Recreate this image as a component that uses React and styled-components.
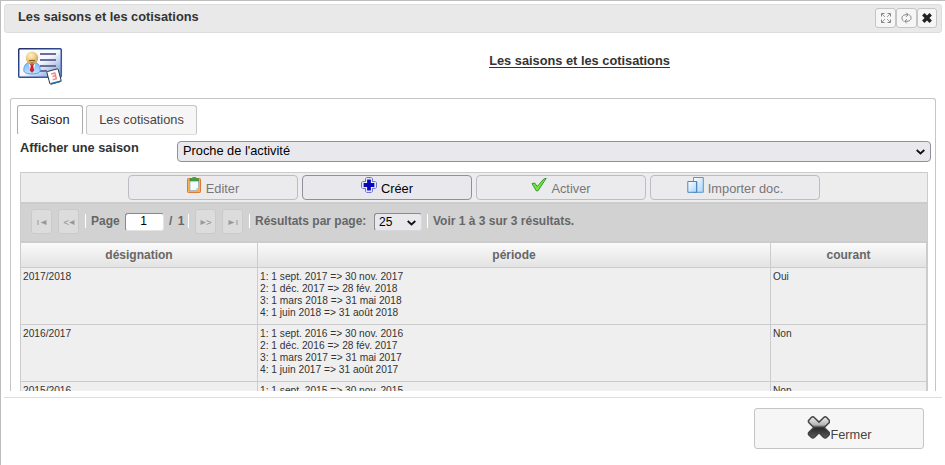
import React from "react";
import styled, { createGlobalStyle, css } from "styled-components";

const Global = createGlobalStyle`
  *, *::before, *::after { box-sizing: border-box; }
  body { margin: 0; background: #fff; overflow: hidden; }
  body, button, input, select { font-family: "Liberation Sans", Arial, sans-serif; }
`;

const Dialog = styled.main`
  width: 945px; height: 465px; overflow: hidden;
  border: solid #bdbdbd; border-width: 1px 0 0 1px;
  padding: 3px 3px 0; background: #fff; color: #333;
  font-size: 12.8px;
`;
const TitleBar = styled.header`
  height: 29px; display: flex; align-items: center; justify-content: space-between;
  padding: 0 4px 0 13px; border: 1px solid #ddd; border-radius: 3px; background: #e9e9e9;
`;
const DialogTitle = styled.h1`
  margin: 0 0 4px; font-size: 12.8px; line-height: 16px;
`;
const Controls = styled.div` display: flex; margin-bottom: 1px; `;
const Control = styled.button`
  width: ${p => p.$strong ? 20 : 21}px; height: 20px; padding: 0; display: grid; place-items: center;
  border: 1px solid #c5c5c5; border-radius: 3px; background: #f6f6f6; color: ${p => p.$strong ? "#222" : "#777"};
  svg { display: block; }
`;
const Heading = styled.section`
  height: 65px; display: grid; grid-template-columns: 206px 1fr; padding-top: 15px;
  > svg { margin-left: 14px; display: block; }
`;
const PageTitle = styled.h2`
  margin: 5px 0 0; padding-left: 7px; text-align: center; font-size: 12.8px; line-height: 16px;
  span { display: inline-block; line-height: 15px; border-bottom: 1px solid #333; height: 15px; }
`;
const Panel = styled.section`
  width: 926px; height: 293px; margin-left: 6px; overflow: hidden;
  border: 1px solid #c5c5c5; border-bottom: 0; border-radius: 3px 3px 0 0; padding: 6px 4px 0 6px;
`;
const Tabs = styled.nav` display: flex; gap: 3px; height: 30px; `;
const Tab = styled.button`
  width: ${p => p.$width}px; height: 30px; padding: 0 0 1px; border: 1px solid #c5c5c5; border-bottom-color: ${p => p.$active ? "#fff" : "#ddd"};
  border-radius: 3px; font-size: 12.8px; color: #454545; background: #f6f6f6;
  ${p => p.$active && css`background: #fff; color: #212121; border-color: #aaa #aaa #fff;`}
`;
const FilterRow = styled.div`
  display: grid; grid-template-columns: 157px 754px; margin: 6px 0 0 3px; height: 31px;
  label { font-weight: bold; line-height: 14px; }
`;
const SelectBox = styled.div`
  position: relative; height: ${p => p.$small ? 18 : 21}px; width: ${p => p.$small ? "48px" : "100%"};
  svg { position: absolute; right: 6px; top: ${p => p.$small ? 7 : 8}px; pointer-events: none; }
`;
const Select = styled.select`
  appearance: none; display: block; width: 100%; height: 100%; padding: 0 5px 2px; color: #000;
  border: 1px solid #8f8f9d; border-radius: 4px; background: #e9e9ed; font-size: 12.8px; line-height: 17px;
  ${p => p.$small && css`border-color: #8c8c8c #d8d8dc #d8d8dc #8c8c8c; border-radius: 3px; font-size: 12px; padding: 0 4px 3px;`}
`;
const Grid = styled.div` margin-left: 3px; width: 908px; border: 1px solid #ccc; border-bottom: 0; `;
const Toolbar = styled.div`
  height: 30px; padding: 2px 0 2px; display: flex; justify-content: center; gap: 4px;
  background: #ededed; border-bottom: 1px solid #ccc;
`;
const Action = styled.button`
  width: 170px; height: 25px; padding: 0 0 1px; display: flex; align-items: flex-start; justify-content: center; gap: 4px;
  border: 1px solid ${p => p.$active ? "#8f8f9d" : "#bcbcc5"}; border-radius: 4px; background: ${p => p.$active ? "#e9e9ed" : "#ebebed"};
  color: ${p => p.$active ? "#000" : "#777"}; font-size: 12.8px; line-height: 15px;
  svg { flex: none; margin-top: 1px; }
  span { margin-top: 5px; }
`;
const Pager = styled.div`
  height: 40px; display: flex; align-items: flex-start; background: #d2d2d2; padding-left: 10px;
  font-size: 12px; font-weight: bold; color: #666; border: solid #ccc; border-width: 1px 0 2px;
`;
const PageButton = styled.button`
  flex: none; width: 21px; height: 25px; margin: 5px 6px 0 0; padding: 1px 0 0; border: 1px solid #cacaca; border-radius: 3px; background: #dcdcdc;
  display: grid; place-items: center; color: #999;
`;
const Divider = styled.i` flex: none; width: 1px; height: 14px; background: #fff; margin: 10px ${p => p.$after || 0}px 0 0; `;
const PagerText = styled.span` flex: none; line-height: 14px; margin: 10px 0 0; width: ${p => p.$width}px; white-space: nowrap; word-spacing: ${p => p.$spread || 0}px; `;
const PageInput = styled.input`
  flex: none; width: 39px; height: 18px; margin: 9px 5px 0 0; border: 1px solid #e4e4e4; border-top-color: #888; border-left-color: #888; border-radius: 3px;
  padding: 0 2px 2px 0; text-align: center; font-size: 12px; color: #000; background: #fff;
`;
const PageSize = styled.div` flex: none; margin: 9px 5px 0 0; `;
const Table = styled.table`
  table-layout: fixed; width: 906px; border-collapse: separate; border-spacing: 0; border-right: 1px solid #ccc;
`;
const Th = styled.th`
  height: 25px; padding: 0; border-bottom: 1px solid #ccc; background: linear-gradient(#fafafa, #e3e3e3);
  font-size: 12px; line-height: 14px; color: #666;
  & + & { border-left: 1px solid #ccc; }
`;
const Td = styled.td`
  height: 57px; padding: 3px 2px 5px; vertical-align: top; border-bottom: 1px solid #ccc; background: #efefef;
  font-size: 10.2px; line-height: 12px; color: #333;
  & + & { border-left: 1px solid #ccc; }
  div { white-space: nowrap; }
`;
const Footer = styled.footer`
  height: 67px; margin-top: 6px; border-top: 1px solid #ddd; padding: 10px 18px 0 0; display: flex; justify-content: flex-end;
`;
const Close = styled.button`
  width: 170px; height: 41px; border: 1px solid #c5c5c5; border-radius: 3px; padding: 0 4px 0 5px; background: #f6f6f6;
  display: flex; align-items: flex-start; justify-content: center; color: #454545; font-size: 12.8px; line-height: 15px;
  svg { margin-top: 7px; } span { margin-top: 18px; }
`;

const Chevron = () => (
  <svg width="9" height="6" viewBox="0 0 9 6" fill="none" stroke="#111" strokeWidth="1.8"><path d="M.7 1 4.5 4.5 8.3 1" /></svg>
);
const ExpandIcon = () => (
  <svg width="10" height="10" viewBox="0 0 10 10" fill="none" stroke="currentColor" strokeWidth=".9">
    <path d="M.5 3.5v-3h3M6.5.5h3v3M9.5 6.5v3h-3M3.5 9.5h-3v-3" /><path d="m1 1 3 3M9 1 6 4M9 9 6 6M1 9l3-3" strokeDasharray="1.1 .5" />
  </svg>
);
const RefreshIcon = () => (
  <svg width="11" height="12" viewBox="0 0 11 12" fill="none" stroke="currentColor" strokeWidth=".9">
    <path d="M2.6 9.2C.4 7.6.7 4.6 2 3.7c.8-.8 2-1 5-1M5.2.6l2 2.1-2 2.1M8.4 2.8c2.2 1.6 1.9 4.6.6 5.5-.8.8-2 1-5 1M5.8 7.2l-2 2.1 2 2.1" />
  </svg>
);
const CrossIcon = () => (
  <svg width="10" height="10" viewBox="0 0 10 10" fill="none" stroke="currentColor" strokeWidth="3.4"><path d="m1.3 1.3 7.4 7.4m0-7.4L1.3 8.7" /></svg>
);
const MemberCardIcon = () => (
  <svg width="46" height="38" viewBox="0 0 46 38">
    <defs>
      <linearGradient id="card" x2="1" y2="1"><stop stopColor="#fff" /><stop offset=".5" stopColor="#f6f8ff" /><stop offset="1" stopColor="#6e8cd2" /></linearGradient>
      <linearGradient id="frame" x2="1" y2="1"><stop stopColor="#22306b" /><stop offset="1" stopColor="#3b69b6" /></linearGradient>
      <radialGradient id="face" cx=".4" cy=".3" r=".7"><stop stopColor="#fff0c8" /><stop offset=".5" stopColor="#efd08a" /><stop offset="1" stopColor="#cf9c48" /></radialGradient>
      <linearGradient id="shirt" x2="0" y2="1"><stop stopColor="#7db8f5" /><stop offset="1" stopColor="#bfe4ff" /></linearGradient>
    </defs>
    <rect x=".7" y=".7" width="42.6" height="28.6" rx="1.4" fill="url(#card)" stroke="url(#frame)" strokeWidth="1.5" />
    <path d="M22 6h16M22 12h16M22 18h16M22 23h7" stroke="#6a7098" strokeWidth="1.9" />
    <path d="M5.8 23c0-5 1.5-7.5 5-8.5h6.4c3.5 1 5 3.5 5 8.5-.8 2-4 3-8.2 3s-7.4-1-8.2-3Z" fill="url(#shirt)" stroke="#4d96ea" strokeWidth=".9" />
    <path d="m10.5 15.5 3 2.5h1l3-2.5-2 7.5h-3Z" fill="#f2f8ff" />
    <path d="M12 16h4l-.8 2 1 4.5-2.2 2.3-2.2-2.3 1-4.5Z" fill="#cf2230" />
    <ellipse cx="14" cy="10" rx="6.2" ry="6.4" fill="url(#face)" />
    <path d="M11.3 13.2c.7-1 1.6-1 2.7-.7 1.1-.3 2-.3 2.7.7" fill="none" stroke="#7b5a29" strokeWidth="1.2" /><path d="M12.6 15h2.8" stroke="#7a4b21" strokeWidth=".8" />
    <g transform="rotate(-15 36 29)">
      <rect x="30.3" y="22" width="11.7" height="13" rx="1" fill="#fff" stroke="#28343e" strokeWidth=".9" />
      <path d="M31 34.8h11" stroke="#256da3" strokeWidth="1.6" />
      <path d="M34 25.3h3.8v6H34M34.6 28.2h3.2" fill="none" stroke="#f08b8e" strokeWidth="1.6" />
    </g>
  </svg>
);
const ClipboardIcon = () => (
  <svg width="15" height="17" viewBox="1 1 15 17">
    <rect x="1.5" y="2.5" width="13" height="14" rx=".8" fill="#f6ad55" stroke="#df7a35" />
    <path d="M4 4h8.5v8L10 14.5H4z" fill="#f7fcff" stroke="#86aabb" strokeWidth=".7" /><path d="M12.5 12H10v2.5" fill="#b6d9e5" />
    <path d="M4 5V2.8h2L7 1.2h2.5l1 1.6h2V5Z" fill="#3fa449" stroke="#278732" strokeWidth=".6" />
  </svg>
);
const PlusIcon = () => (
  <svg width="16" height="16" viewBox="0 0 16 16">
    <path d="M4.6 1.6 5.6.6h4.8l1 1v3h3l1 1v4.8l-1 1h-3v3l-1 1H5.6l-1-1v-3h-3l-1-1V5.6l1-1h3Z" fill="#f5f5ff" stroke="#5757c4" strokeWidth=".9" />
    <path d="M6.1 2.6h3.8v3.5h3.5v3.8H9.9v3.5H6.1V9.9H2.6V6.1h3.5Z" fill="#0808bb" />
  </svg>
);
const CheckIcon = () => (
  <svg width="16" height="16" viewBox="0 0 16 16"><path d="M1 6.6 3.7 6l2.5 3.5L12.8 2l2.4-.7L7 13.8H5.3Z" fill="#75e639" stroke="#278c2e" strokeWidth=".9" strokeLinejoin="round" /></svg>
);
const ImportIcon = () => (
  <svg width="17" height="16" viewBox="0 0 17 16">
    <defs><linearGradient id="doc" x2="1" y2="1"><stop stopColor="#fff" /><stop offset="1" stopColor="#a9d4f5" /></linearGradient></defs>
    <path d="M6.5.5h9.8v14.8H6.5z" fill="url(#doc)" stroke="#5c95c8" /><path d="M.8 4.5h9v10.8h-9z" fill="url(#doc)" stroke="#4a86bd" /><path d="M4.5 4.5h5v10" fill="none" stroke="#4a86bd" />
  </svg>
);
const CloseIcon = () => (
  <svg width="23" height="23" viewBox="-.5 0 23 23">
    <defs>
      <linearGradient id="metal" x2="0" y2="1"><stop stopColor="#eee" /><stop offset=".38" stopColor="#b5b5b5" /><stop offset=".52" stopColor="#292929" /><stop offset="1" stopColor="#5c5c5c" /></linearGradient>
    </defs>
    <path d="M1.3 4.2 4 1.3c1-.8 2-.6 3 .4l4.5 4.4L16 1.7c1-1 2-1.2 3-.4l2.7 2.9c.7.9.5 1.9-.4 2.8l-4.5 4.5 4.5 4.5c.9 1 1 2 .2 2.9L19 21.5c-1 .8-2 .6-3-.3l-4.5-4.4L7 21.2c-1 .9-2 1.1-3 .3l-2.6-2.6c-.8-.9-.6-1.9.3-2.9L6.2 11.5 1.7 7c-.9-.9-1.1-1.9-.4-2.8Z" fill="url(#metal)" stroke="#444" strokeWidth="1.5" />
  </svg>
);
const pagerPaths = {
  first: ["M2 2v5", "M10.5 2 4.5 4.5l6 2.5Z"],
  previous: ["M5.5 2.5.8 4.5l4.7 2", "M11.5 2 6 4.5 11.5 7Z"],
  next: ["m6.5 2.5 4.7 2-4.7 2", "m.5 2 5.5 2.5L.5 7Z"],
  last: ["M10 2v5", "m1.5 2 6 2.5-6 2.5Z"],
};
const PagerIcon = ({ type }) => (
  <svg width="12" height="9" viewBox="0 0 12 9" stroke="currentColor"><path d={pagerPaths[type][0]} fill="none" /><path d={pagerPaths[type][1]} fill="currentColor" stroke="none" /></svg>
);

const actions = [["Editer", ClipboardIcon], ["Créer", PlusIcon, true], ["Activer", CheckIcon], ["Importer doc.", ImportIcon]];
const seasons = [[2017, "Oui"], [2016, "Non"], [2015, "Non"]];

export default function App() {
  return (
    <>
      <Global />
      <Dialog>
        <TitleBar>
          <DialogTitle>Les saisons et les cotisations</DialogTitle>
          <Controls>
            <Control aria-label="Agrandir"><ExpandIcon /></Control>
            <Control aria-label="Actualiser"><RefreshIcon /></Control>
            <Control aria-label="Fermer" $strong><CrossIcon /></Control>
          </Controls>
        </TitleBar>
        <Heading><MemberCardIcon /><PageTitle><span>Les saisons et les cotisations</span></PageTitle></Heading>
        <Panel>
          <Tabs><Tab $width={66} $active>Saison</Tab><Tab $width={111}>Les cotisations</Tab></Tabs>
          <FilterRow>
            <label htmlFor="season">Afficher une saison</label>
            <SelectBox><Select id="season"><option>Proche de l'activité</option></Select><Chevron /></SelectBox>
          </FilterRow>
          <Grid>
            <Toolbar>{actions.map(([label, Icon, active]) => <Action key={label} $active={active} disabled={!active}><Icon /><span>{label}</span></Action>)}</Toolbar>
            <Pager>
              <PageButton aria-label="Première page"><PagerIcon type="first" /></PageButton>
              <PageButton aria-label="Page précédente"><PagerIcon type="previous" /></PageButton>
              <Divider $after={5} /><PagerText $width={34}>Page</PagerText><PageInput defaultValue="1" />
              <PagerText $width={19} $spread={2}>/ 1</PagerText><Divider $after={6} />
              <PageButton aria-label="Page suivante"><PagerIcon type="next" /></PageButton>
              <PageButton aria-label="Dernière page"><PagerIcon type="last" /></PageButton>
              <Divider $after={5} /><PagerText $width={119}>Résultats par page:</PagerText>
              <PageSize><SelectBox $small><Select $small><option>25</option></Select><Chevron /></SelectBox></PageSize>
              <Divider $after={5} /><PagerText $width={150}>Voir 1 à 3 sur 3 résultats.</PagerText>
            </Pager>
            <Table>
              <colgroup><col width="236" /><col width="513" /><col /></colgroup>
              <thead><tr><Th>désignation</Th><Th>période</Th><Th>courant</Th></tr></thead>
              <tbody>
                {seasons.map(([year, current]) => (
                  <tr key={year}>
                    <Td>{`${year}/${year + 1}`}</Td>
                    <Td>
                      <div>{`1: 1 sept. ${year} => 30 nov. ${year}`}</div>
                      <div>{`2: 1 déc. ${year} => 28 fév. ${year + 1}`}</div>
                      <div>{`3: 1 mars ${year + 1} => 31 mai ${year + 1}`}</div>
                      <div>{`4: 1 juin ${year + 1} => 31 août ${year + 1}`}</div>
                    </Td>
                    <Td>{current}</Td>
                  </tr>
                ))}
              </tbody>
            </Table>
          </Grid>
        </Panel>
        <Footer><Close><CloseIcon /><span>Fermer</span></Close></Footer>
      </Dialog>
    </>
  );
}
